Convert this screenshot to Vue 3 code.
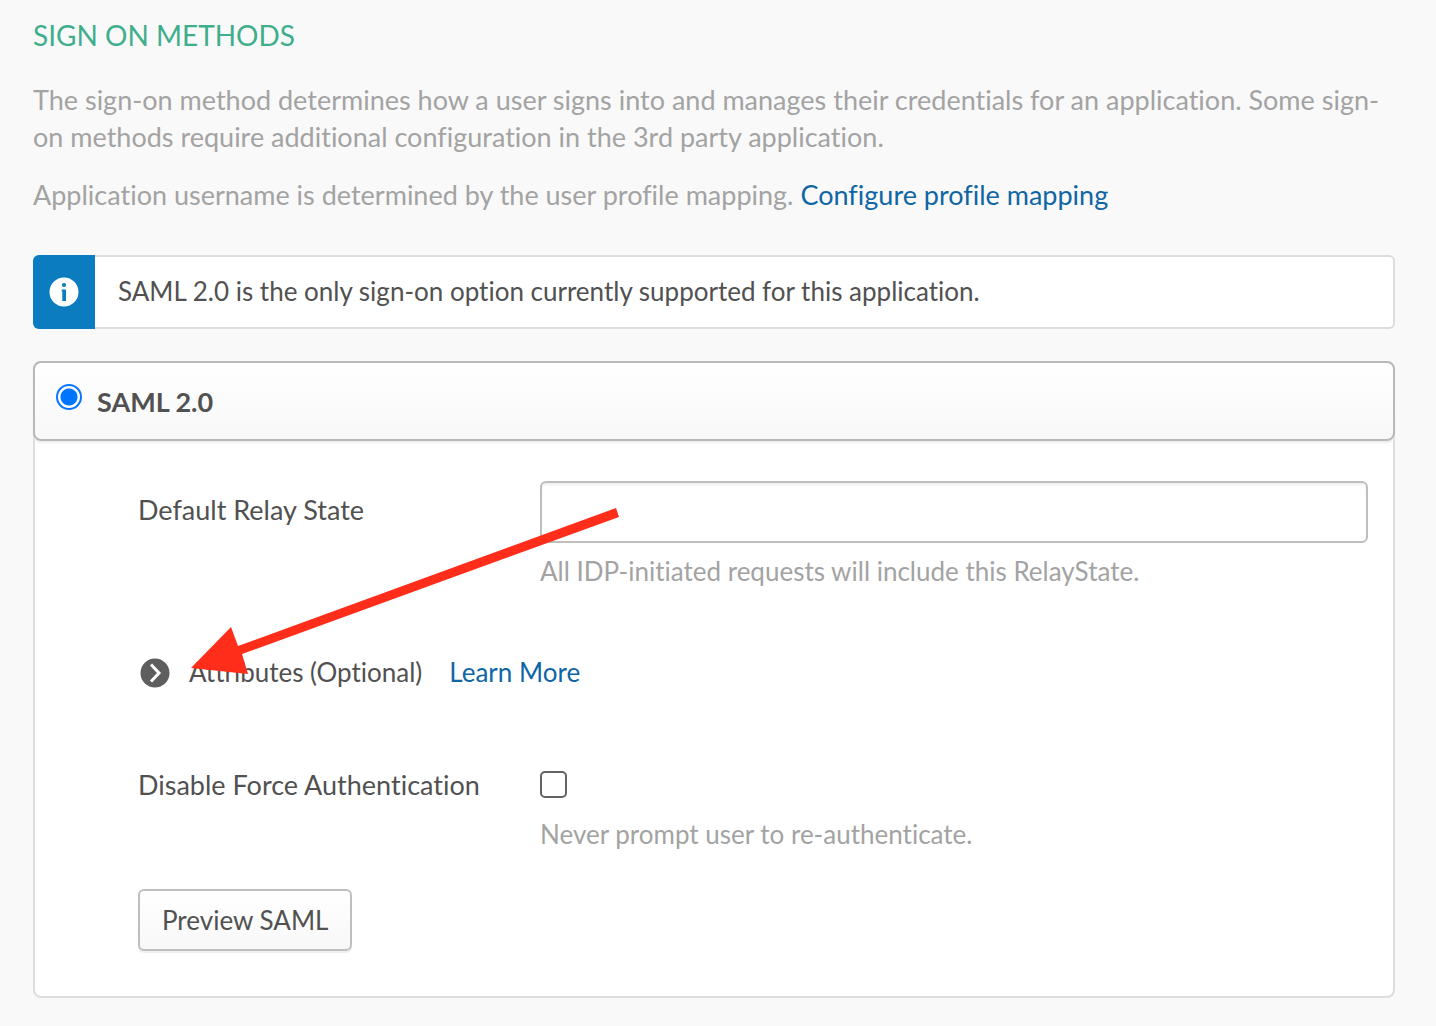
<script setup>
import { ref } from 'vue'

const method = ref('saml')
const relayState = ref('')
const disableForceAuth = ref(false)
</script>

<template>
  <main class="page">
    <h1 class="title">SIGN ON METHODS</h1>
    <p class="intro">
      The sign-on method determines how a user signs into and manages their credentials for an application. Some sign-on methods require additional configuration in the 3rd party application.
    </p>
    <p class="intro">
      Application username is determined by the user profile mapping.
      <a class="link" href="#mapping">Configure profile mapping</a>
    </p>

    <div class="callout">
      <div class="callout-icon">
        <svg width="30" height="30" viewBox="0 0 30 30" aria-hidden="true">
          <circle cx="15" cy="15" r="14.5" fill="#fff" />
          <circle cx="15" cy="8" r="2.1" fill="#0a7cbf" />
          <path d="M12.7 12.5h4.3v11.5h-3.7v-9.5h-.6z" fill="#0a7cbf" />
        </svg>
      </div>
      <p class="callout-text">SAML 2.0 is the only sign-on option currently supported for this application.</p>
    </div>

    <section class="panel">
      <header class="panel-head">
        <input id="saml" v-model="method" class="radio" type="radio" name="method" value="saml" />
        <label class="panel-title" for="saml">SAML 2.0</label>
      </header>

      <form class="form" @submit.prevent>
        <div class="row">
          <label class="label" for="relay">Default Relay State</label>
          <div class="field">
            <input id="relay" v-model="relayState" class="text-input" type="text" />
            <p class="hint">All IDP-initiated requests will include this RelayState.</p>
          </div>
        </div>

        <div class="attributes">
          <button class="toggle" type="button">
            <svg width="30" height="30" viewBox="0 0 30 30" aria-hidden="true">
              <circle cx="15" cy="15" r="14.5" fill="#5e5e5e" />
              <path d="M11 6.5l8 8.5-8 8.5" fill="none" stroke="#fff" stroke-width="3" />
            </svg>
            <span>Attributes (Optional)</span>
          </button>
          <a class="link" href="#learn">Learn More</a>
          <svg class="arrow" width="430" height="170" viewBox="0 0 430 170" aria-hidden="true">
            <path d="M425 8L428 17L51 154L57 174L0 168L40 127L47 146Z" fill="#ff2d1a" />
          </svg>
        </div>

        <div class="row">
          <label class="label check-label" for="force">Disable Force Authentication</label>
          <div class="field">
            <input id="force" v-model="disableForceAuth" class="checkbox" type="checkbox" />
            <p class="hint">Never prompt user to re-authenticate.</p>
          </div>
        </div>

        <button class="preview" type="button">Preview SAML</button>
      </form>
    </section>
  </main>
</template>

<style>
body {
  margin: 0;
  background: #f9f9f9;
}
</style>

<style scoped>
* {
  box-sizing: border-box;
}

.page {
  padding: 17px 41px 28px 33px;
  color: #515151;
  font-family: Lato, "Liberation Sans", sans-serif;
  font-size: 26px;
  font-variant-ligatures: none;
  line-height: 37px;
}

p {
  margin: 0;
}

.title {
  margin: 0 0 27px;
  color: #3fae8c;
  font-size: 28px;
  font-weight: 400;
  line-height: 37px;
}

.intro {
  margin-bottom: 21px;
  color: #a3a3a3;
  font-size: 27px;
}

.link {
  color: #0f66a4;
  text-decoration: none;
}

.callout {
  display: flex;
  margin: 42px 0 32px;
  min-height: 74px;
  border: 2px solid #dddddd;
  border-left: 0;
  border-radius: 6px;
  background: #fff;
}

.callout-icon {
  display: flex;
  flex: none;
  align-items: center;
  justify-content: center;
  width: 62px;
  margin: -2px 0;
  border-radius: 6px 0 0 6px;
  background: #0a7cbf;
}

.callout-icon svg {
  display: block;
}

.callout-text {
  padding: 16px 23px;
}

.panel {
  border: 2px solid #dddddd;
  border-top: 0;
  border-radius: 8px;
  background: #fff;
}

.panel-head {
  display: flex;
  align-items: center;
  gap: 15px;
  height: 80px;
  margin: 0 -2px;
  padding: 0 21px;
  border: 2px solid #b9b9b9;
  border-radius: 8px;
  background: linear-gradient(#ffffff, #f8f8f8);
  box-shadow: 0 2px 2px #eeeeee;
}

.panel-title {
  font-size: 27px;
  font-weight: 700;
}

.radio {
  appearance: none;
  flex: none;
  width: 26px;
  height: 26px;
  margin: 0 0 8px;
  border: 2px solid #0a75ff;
  border-radius: 50%;
  background: radial-gradient(circle, #0075ff 8px, #ffffff 9px);
}

.form {
  padding: 40px 25px 45px 103px;
}

.row {
  display: flex;
}

.label {
  flex: none;
  width: 402px;
  padding-top: 10px;
  font-size: 27px;
}

.field {
  flex: 1;
}

.text-input {
  display: block;
  width: 100%;
  height: 62px;
  padding: 0 16px;
  border: 2px solid #bfbfbf;
  border-radius: 6px;
  background: #fff;
  box-shadow: inset 0 2px 2px #f0f0f0;
  color: inherit;
  font: inherit;
}

.hint {
  margin-top: 10px;
  color: #a3a3a3;
}

.attributes {
  position: relative;
  display: flex;
  align-items: center;
  gap: 27px;
  margin: 64px 0 75px;
}

.toggle {
  display: flex;
  align-items: center;
  gap: 19px;
  padding: 0 0 0 2px;
  border: 0;
  background: none;
  color: inherit;
  font: inherit;
}

.arrow {
  position: absolute;
  bottom: 21px;
  left: 53px;
  overflow: visible;
}

.check-label {
  padding-top: 0;
}

.checkbox {
  appearance: none;
  display: block;
  width: 27px;
  height: 27px;
  margin: 5px 0 18px;
  border: 2px solid #636363;
  border-radius: 5px;
  background: #fff;
}

.preview {
  height: 62px;
  margin-top: 36px;
  padding: 0 22px;
  border: 2px solid #bfbfbf;
  border-radius: 6px;
  background: linear-gradient(#ffffff, #f8f8f8);
  box-shadow: 0 2px 1px #eeeeee;
  color: inherit;
  font: inherit;
}
</style>
